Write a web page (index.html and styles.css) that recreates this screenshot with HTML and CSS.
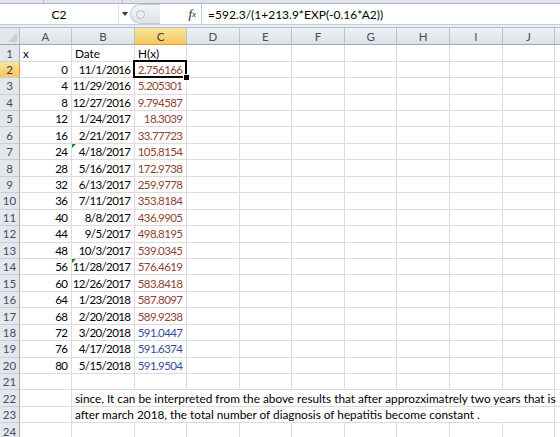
FILE: index.html
```
<!DOCTYPE html>
<html lang="en">
<head>
	<meta charset="UTF-8">
	<title>Book1 - Sheet1</title>
	<link rel="stylesheet" href="styles.css">
</head>
<body>
	<div class="ribbon-edge"><span class="tick t1"></span><span class="tick t2"></span></div>
	<div class="fbar">
		<div class="namebox">C2<span class="drop"></span></div>
		<div class="grip"><span class="dot"></span></div>
		<div class="fx">f<sub>x</sub></div>
		<div class="formula">=592.3/(1+213.9*EXP(-0.16*A2))</div>
	</div>
	<div class="fbar-gap"></div>

	<div class="sheet">
		<div class="row head">
			<div class="corner"></div><div>A</div><div>B</div><div class="sel">C</div><div>D</div><div>E</div><div>F</div><div>G</div><div>H</div><div>I</div><div>J</div><div></div>
		</div>
		<div class="row"><div class="rh">1</div><div>x</div><div>Date</div><div>H(x)</div><span></span><span></span><span></span><span></span><span></span><span></span><span></span><span></span></div>
		<div class="row"><div class="rh sel">2</div><div class="n">0</div><div class="n">11/1/2016</div><div class="n v cur">2.756166</div><span></span><span></span><span></span><span></span><span></span><span></span><span></span><span></span></div>
		<div class="row"><div class="rh">3</div><div class="n">4</div><div class="n">11/29/2016</div><div class="n v">5.205301</div><span></span><span></span><span></span><span></span><span></span><span></span><span></span><span></span></div>
		<div class="row"><div class="rh">4</div><div class="n">8</div><div class="n">12/27/2016</div><div class="n v">9.794587</div><span></span><span></span><span></span><span></span><span></span><span></span><span></span><span></span></div>
		<div class="row"><div class="rh">5</div><div class="n">12</div><div class="n">1/24/2017</div><div class="n v">18.3039</div><span></span><span></span><span></span><span></span><span></span><span></span><span></span><span></span></div>
		<div class="row"><div class="rh">6</div><div class="n">16</div><div class="n">2/21/2017</div><div class="n v">33.77723</div><span></span><span></span><span></span><span></span><span></span><span></span><span></span><span></span></div>
		<div class="row"><div class="rh">7</div><div class="n">24</div><div class="n flag">4/18/2017</div><div class="n v">105.8154</div><span></span><span></span><span></span><span></span><span></span><span></span><span></span><span></span></div>
		<div class="row"><div class="rh">8</div><div class="n">28</div><div class="n">5/16/2017</div><div class="n v">172.9738</div><span></span><span></span><span></span><span></span><span></span><span></span><span></span><span></span></div>
		<div class="row"><div class="rh">9</div><div class="n">32</div><div class="n">6/13/2017</div><div class="n v">259.9778</div><span></span><span></span><span></span><span></span><span></span><span></span><span></span><span></span></div>
		<div class="row"><div class="rh">10</div><div class="n">36</div><div class="n">7/11/2017</div><div class="n v">353.8184</div><span></span><span></span><span></span><span></span><span></span><span></span><span></span><span></span></div>
		<div class="row"><div class="rh">11</div><div class="n">40</div><div class="n">8/8/2017</div><div class="n v">436.9905</div><span></span><span></span><span></span><span></span><span></span><span></span><span></span><span></span></div>
		<div class="row"><div class="rh">12</div><div class="n">44</div><div class="n">9/5/2017</div><div class="n v">498.8195</div><span></span><span></span><span></span><span></span><span></span><span></span><span></span><span></span></div>
		<div class="row"><div class="rh">13</div><div class="n">48</div><div class="n">10/3/2017</div><div class="n v">539.0345</div><span></span><span></span><span></span><span></span><span></span><span></span><span></span><span></span></div>
		<div class="row"><div class="rh">14</div><div class="n">56</div><div class="n flag">11/28/2017</div><div class="n v">576.4619</div><span></span><span></span><span></span><span></span><span></span><span></span><span></span><span></span></div>
		<div class="row"><div class="rh">15</div><div class="n">60</div><div class="n">12/26/2017</div><div class="n v">583.8418</div><span></span><span></span><span></span><span></span><span></span><span></span><span></span><span></span></div>
		<div class="row"><div class="rh">16</div><div class="n">64</div><div class="n">1/23/2018</div><div class="n v">587.8097</div><span></span><span></span><span></span><span></span><span></span><span></span><span></span><span></span></div>
		<div class="row"><div class="rh">17</div><div class="n">68</div><div class="n">2/20/2018</div><div class="n v">589.9238</div><span></span><span></span><span></span><span></span><span></span><span></span><span></span><span></span></div>
		<div class="row"><div class="rh">18</div><div class="n">72</div><div class="n">3/20/2018</div><div class="n v blue">591.0447</div><span></span><span></span><span></span><span></span><span></span><span></span><span></span><span></span></div>
		<div class="row"><div class="rh">19</div><div class="n">76</div><div class="n">4/17/2018</div><div class="n v blue">591.6374</div><span></span><span></span><span></span><span></span><span></span><span></span><span></span><span></span></div>
		<div class="row"><div class="rh">20</div><div class="n">80</div><div class="n">5/15/2018</div><div class="n v blue">591.9504</div><span></span><span></span><span></span><span></span><span></span><span></span><span></span><span></span></div>
		<div class="row"><div class="rh">21</div><span></span><span></span><span></span><span></span><span></span><span></span><span></span><span></span><span></span><span></span><span></span></div>
		<div class="row"><div class="rh">22</div><span></span><div class="spill">since, It can be interpreted from the above results that after approzximatrely two years that is</div><span></span></div>
		<div class="row"><div class="rh">23</div><span></span><div class="spill">after march 2018, the total number of diagnosis of hepatitis become constant .</div><span></span></div>
		<div class="row"><div class="rh">24</div><span></span><span></span><span></span><span></span><span></span><span></span><span></span><span></span><span></span><span></span><span></span></div>
	</div>
</body>
</html>
```

FILE: styles.css
```
:root{
	--rowh:16.45px;
	--grid:#dadcdd;
	--hdrline:#b8c2cd;
	--hdrtext:#3f4f63;
}
html,body{
	margin:0;
	height:100%;
	overflow:hidden;
	background:#fff;
}
body{
	font-family:Lato,"Open Sans",sans-serif;
	font-size:11.8px;
	color:#000;
}

/* ribbon bottom + formula bar */
.ribbon-edge{
	height:3px;
	background:#dfe4ea;
	border-bottom:1px solid #aab6c4;
	position:relative;
}
.tick{position:absolute;top:0;width:1px;height:3px;background:#b9c3ce;}
.t1{left:43px;}
.t2{left:122px;}
.fbar{
	display:flex;
	height:20px;
	background:#fff;
	border-bottom:1px solid #c5ccd5;
}
.namebox{
	width:118px;
	display:flex;
	align-items:center;
	justify-content:center;
	position:relative;
	font-size:12px;
	border-right:1px solid #dfe3e8;
}
.drop{
	position:absolute;
	right:-10px;
	top:8px;
	border-left:3px solid transparent;
	border-right:3px solid transparent;
	border-top:4px solid #333;
}
.grip{
	margin-left:11px;
	width:30px;
	border:1px solid #c4c9cf;
	border-right:none;
	border-radius:10px 0 0 10px;
	background:linear-gradient(#f4f5f7,#dfe2e6);
	display:flex;
	align-items:center;
	padding-left:5px;
	box-sizing:border-box;
}
.dot{
	width:7px;height:7px;
	border:1px solid #b7bcc2;
	border-radius:50%;
	background:#eceef1;
}
.fx{
	width:42px;
	display:flex;
	align-items:center;
	justify-content:flex-end;
	padding-right:5px;
	box-sizing:border-box;
	font-family:"Liberation Serif",serif;
	font-style:italic;
	font-size:13px;
	color:#222;
	background:#fff;
	border-right:1px solid #c5ccd5;
}
.fx sub{font-size:9px;vertical-align:-1px;}
.formula{
	flex:1;
	display:flex;
	align-items:center;
	padding-left:6px;
	font-size:12px;
}
.fbar-gap{
	height:2px;
	background:#e8ecf0;
	border-bottom:1px solid #b6bfca;
}

/* sheet grid */
.row{
	display:grid;
	grid-template-columns:20px 52px 63px 52px repeat(7,52.6px) 1fr;
	height:var(--rowh);
}
.row > *{
	box-sizing:border-box;
	border-right:1px solid var(--grid);
	border-bottom:1px solid var(--grid);
	padding:0 3px;
	display:flex;
	align-items:center;
	white-space:nowrap;
	overflow:hidden;
	position:relative;
}
.row.head{height:17.3px;}
.row.head > *{
	justify-content:center;
	background:linear-gradient(#eef1f4,#dde2e8);
	border-right:1px solid var(--hdrline);
	border-bottom:1px solid #9ea9b6;
	color:var(--hdrtext);
	font-size:11.5px;
}
.row.head .corner{
	background:#e3e7ec;
}
.corner::after{
	content:"";
	position:absolute;
	right:2px;bottom:2px;
	border-left:9px solid transparent;
	border-bottom:9px solid #c8cdd3;
}
.row.head > .sel,.rh.sel{
	background:linear-gradient(#f9e3a0,#f4c95c);
	border-bottom-color:#f29436;
	color:#3a3a3a;
}
.rh{
	justify-content:center;
	padding:0;
	background:#e4e8ed;
	border-right:1px solid #9ea9b6 !important;
	border-bottom:1px solid #c7ced6 !important;
	color:var(--hdrtext);
	font-size:11.5px;
}
.rh.sel{border-right-color:#f29436 !important;}
.n{
	justify-content:flex-end;
	font-size:11.5px;
	letter-spacing:-0.6px;
	padding-right:3.6px;
}
.v{color:#8f4336;}
.v.blue{color:#364d9a;}
.cur{overflow:visible;z-index:2;}
.cur::before{
	content:"";
	position:absolute;
	left:-2px;top:-2px;right:-1px;bottom:-1px;
	border:2px solid #000;
}
.cur::after{
	content:"";
	position:absolute;
	right:-4px;bottom:-4px;
	width:5px;height:5px;
	background:#000;
	border:1px solid #fff;
}
.flag::before{
	content:"";
	position:absolute;
	left:0;top:0;
	border-top:4px solid #1f8a1f;
	border-right:4px solid transparent;
}
.spill{
	grid-column:3 / 12;
	overflow:visible;
}
```
